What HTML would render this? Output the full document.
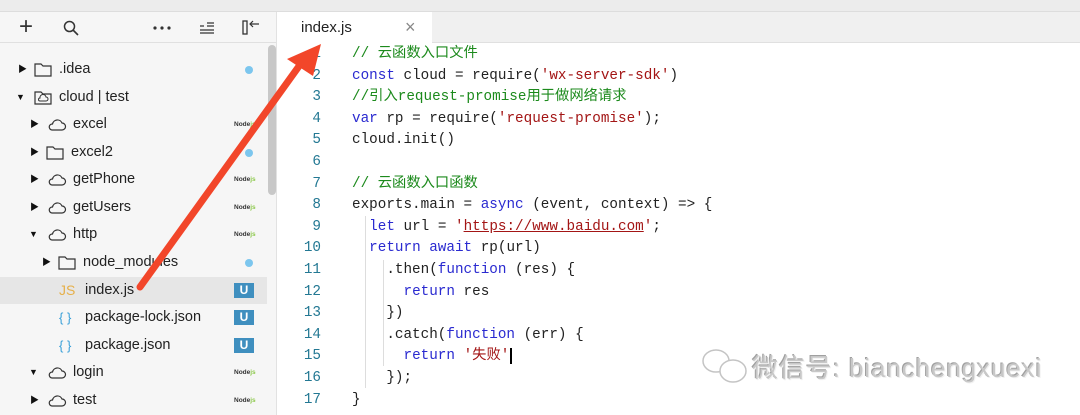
<!DOCTYPE html>
<html><head><meta charset="utf-8"><style>
*{margin:0;padding:0;box-sizing:border-box}
body{width:1080px;height:415px;overflow:hidden;background:#fff;position:relative;font-family:"Liberation Sans","Noto Sans CJK SC",sans-serif}
.top{position:absolute;left:0;top:0;width:1080px;height:12px;background:#ececec;border-bottom:1px solid #ddd}
.side{position:absolute;left:0;top:12px;width:277px;height:403px;background:#f6f6f6;border-right:1px solid #e2e2e2}
.tb{height:31px;border-bottom:1px solid #e0e0e0;position:relative;font-size:20px;color:#333}
.tb span{position:absolute;top:3px}
.row{position:absolute;left:0;width:267px;height:27px;font-size:14.5px;color:#222;line-height:27px}
.row.sel{background:#e6e6e6}
.tri{position:absolute;top:0;font-size:9px;color:#111}
.ic{position:absolute;top:7px}
.lbl{position:absolute;top:0}
.nd{position:absolute;left:234px;top:0;font-size:6.5px;font-weight:bold;color:#333}
.nd b{color:#8cc84b}
.dot{position:absolute;left:245px;top:10px;width:8px;height:8px;border-radius:50%;background:#7cc6ee}
.u{position:absolute;left:234px;top:6px;width:20px;height:15px;background:#3f8fbf;color:#fff;font-size:12px;line-height:15px;text-align:center;font-weight:bold}
.sb{position:absolute;left:268px;top:45px;width:8px;height:150px;background:#c8c8c8;border-radius:4px}
.tabs{position:absolute;left:277px;top:12px;width:803px;height:31px;background:#f0f0f0;border-bottom:1px solid #e0e0e0}
.tab{position:absolute;left:0;top:0;width:155px;height:32px;background:#fff;font-size:15px;color:#222}
.code{position:absolute;left:277px;top:43px;width:803px;height:372px;font-family:"Liberation Mono","Noto Sans CJK SC",monospace;font-size:14.3px}
.ln{position:absolute;left:0;width:44px;text-align:right;color:#237893;height:21.6px;line-height:21.6px}
.cl{position:absolute;left:75px;height:21.6px;line-height:21.6px;color:#222;white-space:pre}
.k{color:#2a2ad0}.s{color:#a31515}.c{color:#1c8a1c}
.wm{position:absolute;left:752px;top:348px;font-size:26px;color:#c8c8c8;text-shadow:1px 1px 0 #f2f2f2,-1px -1px 0 #a0a0a0;letter-spacing:0.9px}
</style></head><body>
<div class="top"></div>
<div class="side">
 <div class="tb"><span style="left:-4px;font-size:12px;top:8px">‸</span><span style="left:19px;font-size:24px;top:1px">+</span>
 <svg style="position:absolute;left:63px;top:8px" width="16" height="16"><circle cx="6.5" cy="6.5" r="5" fill="none" stroke="#333" stroke-width="1.5"/><line x1="10" y1="10" x2="15" y2="15" stroke="#333" stroke-width="1.6"/></svg>
 <svg style="position:absolute;left:153px;top:14px" width="18" height="4"><circle cx="2" cy="2" r="1.6" fill="#333"/><circle cx="9" cy="2" r="1.6" fill="#333"/><circle cx="16" cy="2" r="1.6" fill="#333"/></svg>
 <svg style="position:absolute;left:198px;top:10px" width="18" height="12"><path d="M2 4h4M2 8h14M2 11h14M9 1h7M9 4h7" stroke="#333" stroke-width="1.2"/></svg>
 <svg style="position:absolute;left:242px;top:7px" width="20" height="18"><rect x="1" y="2" width="4" height="13" fill="none" stroke="#333" stroke-width="1.3"/><path d="M8 5h9M11 2l-3 3 3 3" fill="none" stroke="#333" stroke-width="1.2"/></svg>
 </div>
</div>
<div class="sb"></div>
<div class="tabs"><div class="tab"><span style="position:absolute;left:24px;top:7px">index.js</span><span style="position:absolute;left:128px;top:5px;font-size:18px;color:#888">×</span></div></div>

<div class="row" style="top:56px"><span class="tri" style="left:18px">▶</span><svg class="ic" style="left:34px" width="18" height="14"><path d="M1 1h6l2 2h8v10H1z" fill="none" stroke="#333" stroke-width="1.2"/></svg><span class="lbl" style="left:59px">.idea</span><span class="dot"></span></div>
<div class="row" style="top:84px"><span class="tri" style="left:16px">▼</span><svg class="ic" style="left:34px" width="18" height="14"><path d="M1 1h6l2 2h8v10H1z" fill="none" stroke="#333" stroke-width="1.2"/><path d="M6 10h6a2 2 0 0 0 0-4a3 3 0 0 0-6 1a1.5 1.5 0 0 0 0 3z" fill="none" stroke="#333" stroke-width="1"/></svg><span class="lbl" style="left:59px">cloud | test</span></div>
<div class="row" style="top:111px"><span class="tri" style="left:30px">▶</span><svg class="ic" style="left:47px" width="20" height="14"><path d="M5 12h10a3.5 3.5 0 0 0 0-7a5 5 0 0 0-9.5 1a3 3 0 0 0-.5 6z" fill="none" stroke="#333" stroke-width="1.2"/></svg><span class="lbl" style="left:73px">excel</span><span class="nd">Node<b>js</b></span></div>
<div class="row" style="top:139px"><span class="tri" style="left:30px">▶</span><svg class="ic" style="left:46px" width="18" height="14"><path d="M1 1h6l2 2h8v10H1z" fill="none" stroke="#333" stroke-width="1.2"/></svg><span class="lbl" style="left:71px">excel2</span><span class="dot"></span></div>
<div class="row" style="top:166px"><span class="tri" style="left:30px">▶</span><svg class="ic" style="left:47px" width="20" height="14"><path d="M5 12h10a3.5 3.5 0 0 0 0-7a5 5 0 0 0-9.5 1a3 3 0 0 0-.5 6z" fill="none" stroke="#333" stroke-width="1.2"/></svg><span class="lbl" style="left:73px">getPhone</span><span class="nd">Node<b>js</b></span></div>
<div class="row" style="top:194px"><span class="tri" style="left:30px">▶</span><svg class="ic" style="left:47px" width="20" height="14"><path d="M5 12h10a3.5 3.5 0 0 0 0-7a5 5 0 0 0-9.5 1a3 3 0 0 0-.5 6z" fill="none" stroke="#333" stroke-width="1.2"/></svg><span class="lbl" style="left:73px">getUsers</span><span class="nd">Node<b>js</b></span></div>
<div class="row" style="top:221px"><span class="tri" style="left:29px">▼</span><svg class="ic" style="left:47px" width="20" height="14"><path d="M5 12h10a3.5 3.5 0 0 0 0-7a5 5 0 0 0-9.5 1a3 3 0 0 0-.5 6z" fill="none" stroke="#333" stroke-width="1.2"/></svg><span class="lbl" style="left:73px">http</span><span class="nd">Node<b>js</b></span></div>
<div class="row" style="top:249px"><span class="tri" style="left:42px">▶</span><svg class="ic" style="left:58px" width="18" height="14"><path d="M1 1h6l2 2h8v10H1z" fill="none" stroke="#333" stroke-width="1.2"/></svg><span class="lbl" style="left:83px">node_modules</span><span class="dot"></span></div>
<div class="row sel" style="top:277px"><span class="lbl" style="left:59px;color:#e6b04a;font-size:14px">JS</span><span class="lbl" style="left:85px">index.js</span><span class="u">U</span></div>
<div class="row" style="top:304px"><span class="lbl" style="left:59px;color:#3aa0d8;font-size:13px">{ }</span><span class="lbl" style="left:85px">package-lock.json</span><span class="u">U</span></div>
<div class="row" style="top:332px"><span class="lbl" style="left:59px;color:#3aa0d8;font-size:13px">{ }</span><span class="lbl" style="left:85px">package.json</span><span class="u">U</span></div>
<div class="row" style="top:359px"><span class="tri" style="left:29px">▼</span><svg class="ic" style="left:47px" width="20" height="14"><path d="M5 12h10a3.5 3.5 0 0 0 0-7a5 5 0 0 0-9.5 1a3 3 0 0 0-.5 6z" fill="none" stroke="#333" stroke-width="1.2"/></svg><span class="lbl" style="left:73px">login</span><span class="nd">Node<b>js</b></span></div>
<div class="row" style="top:387px"><span class="tri" style="left:30px">▶</span><svg class="ic" style="left:47px" width="20" height="14"><path d="M5 12h10a3.5 3.5 0 0 0 0-7a5 5 0 0 0-9.5 1a3 3 0 0 0-.5 6z" fill="none" stroke="#333" stroke-width="1.2"/></svg><span class="lbl" style="left:73px">test</span><span class="nd">Node<b>js</b></span></div>

<div class="code">
<div class="ln" style="top:1px">1</div><div class="cl c" style="top:1px">// 云函数入口文件</div>
<div class="ln" style="top:22.6px">2</div><div class="cl" style="top:22.6px"><span class="k">const</span> cloud = require(<span class="s">'wx-server-sdk'</span>)</div>
<div class="ln" style="top:44.2px">3</div><div class="cl c" style="top:44.2px">//引入request-promise用于做网络请求</div>
<div class="ln" style="top:65.8px">4</div><div class="cl" style="top:65.8px"><span class="k">var</span> rp = require(<span class="s">'request-promise'</span>);</div>
<div class="ln" style="top:87.4px">5</div><div class="cl" style="top:87.4px">cloud.init()</div>
<div class="ln" style="top:109px">6</div>
<div class="ln" style="top:130.6px">7</div><div class="cl c" style="top:130.6px">// 云函数入口函数</div>
<div class="ln" style="top:152.2px">8</div><div class="cl" style="top:152.2px">exports.main = <span class="k">async</span> (event, context) =&gt; {</div>
<div class="ln" style="top:173.8px">9</div><div class="cl" style="top:173.8px">  <span class="k">let</span> url = <span class="s">'<u>https://www.baidu.com</u>'</span>;</div>
<div class="ln" style="top:195.4px">10</div><div class="cl" style="top:195.4px">  <span class="k">return await</span> rp(url)</div>
<div class="ln" style="top:217px">11</div><div class="cl" style="top:217px">    .then(<span class="k">function</span> (res) {</div>
<div class="ln" style="top:238.6px">12</div><div class="cl" style="top:238.6px">      <span class="k">return</span> res</div>
<div class="ln" style="top:260.2px">13</div><div class="cl" style="top:260.2px">    })</div>
<div class="ln" style="top:281.8px">14</div><div class="cl" style="top:281.8px">    .catch(<span class="k">function</span> (err) {</div>
<div class="ln" style="top:303.4px">15</div><div class="cl" style="top:303.4px">      <span class="k">return</span> <span class="s">'失败'</span><span style="border-left:2px solid #000;margin-left:1px"></span></div>
<div class="ln" style="top:325px">16</div><div class="cl" style="top:325px">    });</div>
<div class="ln" style="top:346.6px">17</div><div class="cl" style="top:346.6px">}</div>
<div style="position:absolute;left:88px;top:173px;width:1px;height:172px;background:#ddd"></div>
<div style="position:absolute;left:106px;top:217px;width:1px;height:106px;background:#ddd"></div>
</div>

<svg style="position:absolute;left:0;top:0" width="1080" height="415">
<line x1="140" y1="287" x2="302" y2="62" stroke="#f2462a" stroke-width="7" stroke-linecap="round"/>
<polygon points="321,44 287,59 313,76" fill="#f2462a"/>
<g fill="none" stroke="#c4c4c4" stroke-width="1.5"><ellipse cx="716" cy="361" rx="13" ry="11"/><ellipse cx="733" cy="371" rx="13" ry="11" fill="#fff"/></g>
</svg>
<div class="wm">微信号: bianchengxuexi</div>
</body></html>
